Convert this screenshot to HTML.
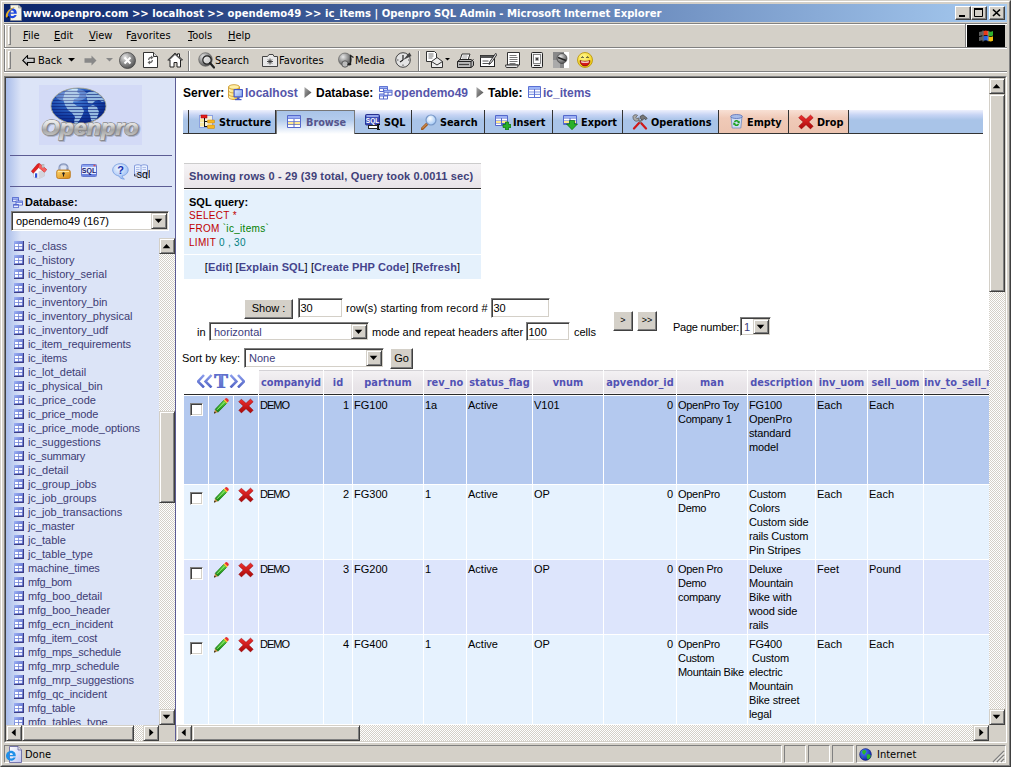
<!DOCTYPE html>
<html><head><meta charset="utf-8"><title>www.openpro.com &gt;&gt; localhost &gt;&gt; opendemo49 &gt;&gt; ic_items | Openpro SQL Admin</title>
<style>
*{box-sizing:border-box;margin:0;padding:0}
html,body{width:1011px;height:767px;overflow:hidden;background:#d4d0c8}
body{position:relative;font-family:"Liberation Sans",Arial,sans-serif;font-size:11px;color:#000}
.abs{position:absolute}
svg{overflow:visible}
.ui{font-family:"DejaVu Sans Condensed","DejaVu Sans","Liberation Sans",sans-serif;font-size:11px;color:#000;white-space:nowrap}
.tb{font-family:"DejaVu Sans Condensed","DejaVu Sans","Liberation Sans",sans-serif;font-weight:bold;white-space:nowrap}
#winborder{left:0;top:0;width:1011px;height:767px;border:1px solid;border-color:#d4d0c8 #404040 #404040 #d4d0c8}
#winborder2{left:1px;top:1px;width:1009px;height:765px;border:1px solid;border-color:#fff #808080 #808080 #fff}
#title{left:4px;top:4px;width:1003px;height:18px;background:linear-gradient(90deg,#0a246a 0%,#a6caf0 100%)}
#title .t{left:19px;top:3px;color:#fff;font-weight:bold;font-size:11.2px;line-height:14px}
.capbtn{top:2px;width:16px;height:14px;background:#d4d0c8;border:1px solid;border-color:#fff #404040 #404040 #fff;box-shadow:inset -1px -1px 0 #808080}
#menubar{left:4px;top:23px;width:1003px;height:24px}
#toolbar{left:4px;top:48px;width:1003px;height:25px}
.grip{width:3px;border:1px solid;border-color:#fff #808080 #808080 #fff}
.hsep{height:2px;border-top:1px solid #808080;border-bottom:1px solid #fff}
.vsep{width:2px;border-left:1px solid #808080;border-right:1px solid #fff}
.menu{top:6px;line-height:13px}
.tbt{top:6px;line-height:13px}
#frames{left:4px;top:76px;width:1003px;height:667px;border:1px solid;border-color:#808080 #fff #fff #808080}
#frames2{left:5px;top:77px;width:1001px;height:665px;border:1px solid;border-color:#404040 #d4d0c8 #d4d0c8 #404040;background:#fff}
#left{left:6px;top:78px;width:169px;height:663px;background:linear-gradient(90deg,#a9bdea 0,#dce4f7 15px,#dce4f7 100%);overflow:hidden}
#lsplit{left:175px;top:78px;width:2px;height:663px;background:linear-gradient(180deg,#fff 0,#fff 647px,#d4d0c8 647px);border-left:1px solid #5c5c94}
#right{left:177px;top:78px;width:828px;height:663px;background:#fff;overflow:hidden}
.track{background-color:#fff;background-image:conic-gradient(#d4d0c8 25%,#fff 0 50%,#d4d0c8 0 75%,#fff 0);background-size:2px 2px}
.sbtn{width:16px;height:16px;background:#d4d0c8;border:1px solid;border-color:#d4d0c8 #404040 #404040 #d4d0c8;box-shadow:inset 1px 1px 0 #fff,inset -1px -1px 0 #808080}
.sbtn svg{position:absolute;left:-1px;top:-1px}
.spanel{top:745px;height:18px;border:1px solid;border-color:#808080 #fff #fff #808080}
/* left frame */
.lhr{left:4px;width:162px;height:1px;background:#5c5c94}
.ti{left:0;width:153px;height:14px}
.tn{left:22px;top:0;line-height:14px;font-size:11px;color:#3c3c74;white-space:nowrap}
.sel{background:#fff;border:1px solid;border-color:#808080 #fff #fff #808080;box-shadow:inset 1px 1px 0 #404040,inset -1px -1px 0 #d4d0c8}
.sel .v{left:4px;top:3px;line-height:13px;font-size:11px;white-space:nowrap}
.sel .dd{right:1px;top:1px;bottom:1px;width:16px;height:auto}
.inp{background:#fff;border:1px solid;border-color:#808080 #fff #fff #808080;box-shadow:inset 1px 1px 0 #404040,inset -1px -1px 0 #d4d0c8}
.inp span{position:absolute;left:1.5px;top:3px;line-height:13px;font-size:11px}
.btn{background:#d4d0c8;border:1px solid;border-color:#fff #404040 #404040 #fff;box-shadow:inset -1px -1px 0 #808080,inset 1px 1px 0 #d4d0c8;text-align:center;font-size:11px}
/* right frame */
.bc{top:8px;font-size:12px;font-weight:bold;line-height:15px;white-space:nowrap}
.bc.l{color:#5555aa}
#tabs{left:6px;top:32px;width:800px;height:24px;background:linear-gradient(180deg,#eef0fc 0,#c6d4f4 5px,#a9c4e8 10px,#a9c4e8 100%);border-bottom:1px solid #333}
.tab{top:0;height:23px;border-right:1px solid #333}
.tab.warn{background:linear-gradient(180deg,#f8e0d4 0,#f0cab8 8px,#ecc4b0 100%)}
.tab .tb{position:absolute;top:6px;font-size:10.8px;line-height:13px;color:#000}
.th{top:292px;height:25px;background:linear-gradient(180deg,#f3f1f3 0,#e9e5e9 60%,#e6e2e6 100%);border-top:1px solid #d4d2d6;border-bottom:1px solid #2a2a2a;text-align:center;box-shadow:inset 0 -1px 0 #f4f0f4}
.th .tb{font-size:10.9px;color:#5252b4;line-height:24px;display:block}
.c{font-size:11px;line-height:14px;padding:2px 1px 0 1px;overflow:hidden}
.r1{background:#b4c9ef}.r2{background:#e6f2fe}.r3{background:#dde5fc}
.cb{width:13px;height:13px;background:#fff;border:1px solid;border-color:#808080 #fff #fff #808080;box-shadow:inset 1px 1px 0 #404040,inset -1px -1px 0 #d4d0c8}
.t11{font-size:11px;line-height:13px;white-space:nowrap}
.sq{font-size:10px;line-height:13px;white-space:nowrap;letter-spacing:.3px}
.lk{font-size:11px;letter-spacing:.1px;line-height:14px;text-align:center;white-space:nowrap}
.lk b{color:#44448c}

</style></head><body>
<svg width="0" height="0" style="position:absolute">
<defs>
<linearGradient id="g-bl" x1="0" y1="0" x2="0" y2="1"><stop offset="0" stop-color="#93a5f2"/><stop offset="1" stop-color="#4a5bc6"/></linearGradient>
<linearGradient id="g-gray" x1="0" y1="0" x2="1" y2="1"><stop offset="0" stop-color="#aaa"/><stop offset="1" stop-color="#444"/></linearGradient>
<linearGradient id="g-yel" x1="0" y1="0" x2="1" y2="0"><stop offset="0" stop-color="#fff4c0"/><stop offset=".5" stop-color="#ffe070"/><stop offset="1" stop-color="#e0a820"/></linearGradient>
<linearGradient id="g-red" x1="0" y1="0" x2="0" y2="1"><stop offset="0" stop-color="#f03030"/><stop offset="1" stop-color="#a80808"/></linearGradient>
<linearGradient id="g-grn" x1="0" y1="0" x2="0" y2="1"><stop offset="0" stop-color="#60d840"/><stop offset="1" stop-color="#108010"/></linearGradient>
<linearGradient id="g-mon" x1="0" y1="0" x2="1" y2="1"><stop offset="0" stop-color="#d8e8ff"/><stop offset="1" stop-color="#88a8f0"/></linearGradient>
<linearGradient id="g-T" x1="0" y1="0" x2="0" y2="1"><stop offset="0" stop-color="#8a9cec"/><stop offset="1" stop-color="#5264c4"/></linearGradient>
<radialGradient id="g-globe" cx=".4" cy=".3" r=".8"><stop offset="0" stop-color="#5a9cf0"/><stop offset=".6" stop-color="#1848b0"/><stop offset="1" stop-color="#081c78"/></radialGradient>
<linearGradient id="g-metal" x1="0" y1="0" x2="0" y2="1"><stop offset="0" stop-color="#ffffff"/><stop offset=".4" stop-color="#dcdcdc"/><stop offset=".6" stop-color="#a4a4a4"/><stop offset="1" stop-color="#d8d8d8"/></linearGradient>
<radialGradient id="g-lens" cx=".4" cy=".35" r=".7"><stop offset="0" stop-color="#fff"/><stop offset="1" stop-color="#9cc4f4"/></radialGradient>
<radialGradient id="g-help" cx=".4" cy=".3" r=".8"><stop offset="0" stop-color="#f0f6ff"/><stop offset="1" stop-color="#8cb4f4"/></radialGradient>
<linearGradient id="g-lock" x1="0" y1="0" x2="1" y2="1"><stop offset="0" stop-color="#ffd870"/><stop offset="1" stop-color="#d88810"/></linearGradient>

<!-- tiny table icon (left list) 10x10 -->
<linearGradient id="g-tbl" x1="0" y1="0" x2="1" y2="1"><stop offset="0" stop-color="#a0b4f6"/><stop offset="1" stop-color="#4858bc"/></linearGradient><symbol id="i-tbl" viewBox="0 0 10 10"><rect x="0" y="0" width="10" height="10" fill="#3c3c84"/><rect x="0" y="0" width="9" height="9" fill="url(#g-tbl)"/><rect x="1" y="3" width="3.200" height="2.200" fill="#fff"/><rect x="5" y="3" width="3.200" height="2.200" fill="#f4f6ff"/><rect x="1" y="6" width="3.200" height="2.200" fill="#fff"/><rect x="5" y="6" width="3.200" height="2.200" fill="#e8ecff"/></symbol>
<!-- arrows -->
<symbol id="a-up" viewBox="0 0 16 16"><path d="M3.700 10.200h7.600L7.500 6z" fill="#000"/></symbol>
<symbol id="a-dn" viewBox="0 0 16 16"><path d="M3.700 5.800h7.600L7.500 10z" fill="#000"/></symbol>
<symbol id="a-lt" viewBox="0 0 16 16"><path d="M9.700 3.700v7.600L5.500 7.500z" fill="#000"/></symbol>
<symbol id="a-rt" viewBox="0 0 16 16"><path d="M6.300 3.700v7.600l4.200-3.800z" fill="#000"/></symbol>
<!-- pencil 16x16 -->
<symbol id="i-edit" viewBox="0 0 16 16"><path d="M1 15.500l1.200-4.200 2.800 2.900z" fill="#c89040"/><path d="M1 15.500l.6-1.900 1.300 1.300z" fill="#111"/><path d="M2.200 11.300L10.600 2.400l3 3L5 14.200z" fill="url(#g-grn)" stroke="#0a6a0a" stroke-width=".6"/><path d="M4 11.800l7.600-7.800" stroke="#a0f080" stroke-width="1"/><path d="M10.600 2.400l1-1.100 3 3-1 1.100z" fill="#f8c820"/><path d="M11.600 1.300l.9-.9c.6-.5 1.300-.4 1.900.2l1 1c.5.600.5 1.300 0 1.800l-.8.900z" fill="#e83030"/></symbol>
<!-- red X 16x16 -->
<symbol id="i-drop" viewBox="0 0 16 16"><path d="M3.300 1.200L8 5.300l4.500-4.200 2.700 2.600-4.400 4.200 4.400 4.300-2.700 2.700L8 10.700l-4.600 4.200L.8 12.300l4.400-4.400L.7 3.800z" fill="url(#g-red)" stroke="#900808" stroke-width=".5" stroke-linejoin="round"/></symbol>
<!-- structure -->
<symbol id="i-struct" viewBox="0 0 16 16"><rect x=".5" y="1.500" width="13" height="12" fill="#f4f0dc" stroke="#8aa0e0" stroke-width="1"/><rect x="1" y="5" width="4" height="3" fill="#f8e8a0"/><rect x="1" y="9" width="4" height="3" fill="#f8e8a0"/><rect x="2" y="1" width="6" height="3" fill="#e02020" stroke="#a00" stroke-width=".5"/><path d="M5.500 4v9M5.500 7.500h3M5.500 12.500h3" stroke="#111" stroke-width="1" fill="none"/><rect x="8.500" y="6" width="7" height="3" rx=".5" fill="#f8b820" stroke="#c08010" stroke-width=".5"/><rect x="8.500" y="11" width="7" height="3.500" rx=".5" fill="#f8b820" stroke="#c08010" stroke-width=".5"/></symbol>
<!-- browse 14x13 -->
<symbol id="i-browse" viewBox="0 0 14 13"><rect x="0" y="0" width="14" height="13" rx="1" fill="#5468cc"/><rect x="1" y="1" width="12" height="2.500" fill="#9cb0f4"/><rect x="1" y="4" width="5.500" height="2.300" fill="#fff"/><rect x="7.500" y="4" width="5.500" height="2.300" fill="#fff"/><rect x="1" y="7" width="5.500" height="2.300" fill="#ffe890"/><rect x="7.500" y="7" width="5.500" height="2.300" fill="#ffe890"/><rect x="1" y="10" width="5.500" height="2" fill="#fff"/><rect x="7.500" y="10" width="5.500" height="2" fill="#fff"/></symbol>
<symbol id="i-tbl13" viewBox="0 0 13 12"><rect x="0" y="0" width="13" height="12" rx="1" fill="#5a70d4"/><rect x="1" y="1" width="11" height="2" fill="#9cb4f8"/><rect x="1" y="3.600" width="5" height="2" fill="#fff"/><rect x="7" y="3.600" width="5" height="2" fill="#fff"/><rect x="1" y="6.300" width="5" height="2" fill="#e8f0ff"/><rect x="7" y="6.300" width="5" height="2" fill="#e8f0ff"/><rect x="1" y="9" width="5" height="2" fill="#fff"/><rect x="7" y="9" width="5" height="2" fill="#fff"/></symbol>
<!-- sql window -->
<symbol id="i-sql" viewBox="0 0 16 16"><rect x=".5" y=".5" width="14" height="10.500" rx="1" fill="#3c4cb8" stroke="#283090" stroke-width="1"/><rect x="1.500" y="1.200" width="12" height="1.600" fill="#a8b8f8"/><text x="7.500" y="8.800" font-family="Liberation Sans,sans-serif" font-weight="bold" font-size="6.500" fill="#fff" text-anchor="middle">SQL</text><rect x="3.500" y="11.500" width="9" height="3" fill="#fff" stroke="#222" stroke-width="1"/><path d="M12 10.500h3M13.500 10.500v5M12 15.500h3" stroke="#111" stroke-width="1" fill="none"/></symbol>
<!-- search -->
<symbol id="i-search" viewBox="0 0 16 16"><path d="M1.200 14.800l5-5" stroke="#a05a20" stroke-width="3" stroke-linecap="round"/><path d="M1.400 14.200l4.300-4.300" stroke="#e0a060" stroke-width="1" stroke-linecap="round"/><circle cx="10" cy="6" r="5" fill="url(#g-lens)" stroke="#7898c8" stroke-width="1.200"/></symbol>
<!-- insert -->
<symbol id="i-insert" viewBox="0 0 16 16"><rect x="0" y="1" width="13" height="11" rx="1" fill="#5468cc"/><rect x="1" y="2" width="11" height="2" fill="#9cb0f4"/><rect x="1" y="4.500" width="5" height="2" fill="#fff"/><rect x="7" y="4.500" width="5" height="2" fill="#fff"/><rect x="1" y="7" width="5" height="2" fill="#ffe890"/><rect x="7" y="7" width="5" height="2" fill="#ffe890"/><rect x="1" y="9.500" width="5" height="1.500" fill="#fff"/><path d="M10.500 8h3v2.500H16v3h-2.500V16h-3v-2.500H8v-3h2.500z" fill="#28b028" stroke="#0a700a" stroke-width=".7"/></symbol>
<!-- export -->
<symbol id="i-export" viewBox="0 0 16 16"><rect x="0" y="1" width="14" height="10" rx="1" fill="#5468cc"/><rect x="1" y="2" width="12" height="2" fill="#9cb0f4"/><rect x="1" y="4.500" width="5.500" height="2" fill="#fff"/><rect x="7.500" y="4.500" width="5.500" height="2" fill="#fff"/><rect x="1" y="7" width="5.500" height="2" fill="#ffe890"/><rect x="7.500" y="7" width="5.500" height="2" fill="#ffe890"/><path d="M6.500 6.500h5v3.500h3L9 15.700 3.500 10h3z" fill="#28b028" stroke="#0a700a" stroke-width=".7"/></symbol>
<!-- operations -->
<symbol id="i-ops" viewBox="0 0 16 16"><path d="M10.500 5L6.500 9.500" stroke="#777" stroke-width="1.800" stroke-linecap="round"/><path d="M6.500 6l3.500 4" stroke="#777" stroke-width="1.800" stroke-linecap="round"/><path d="M2 14.500L6.800 9.200" stroke="#d01818" stroke-width="2.200" stroke-linecap="round"/><path d="M14 14.500L9.500 9.500" stroke="#d01818" stroke-width="2.200" stroke-linecap="round"/><path d="M8 2.500l3-1.700 4.200 3.400-1.400 1.600-1.700-1.400-1.600 1.800-2-1.700z" fill="#777" stroke="#333" stroke-width=".6"/><path d="M1 2.200c1-1.700 3.200-1.900 4.600-.8L3.800 3.200l1 1.400 2.300-.7c.3 1.600-.6 3-2.400 3.300C2.500 7.400.500 5 1 2.200z" fill="#aaa" stroke="#444" stroke-width=".6"/></symbol>
<!-- empty -->
<symbol id="i-empty" viewBox="0 0 13 15"><path d="M1 2.500L2.200 14h8.600L12 2.500z" fill="#d0dcf4" stroke="#7088c0" stroke-width=".8"/><ellipse cx="6.500" cy="2.500" rx="5.800" ry="2" fill="#a8bce8" stroke="#5870b8" stroke-width=".8"/><path d="M4 7.500c1-2 4-2 5 0l1-.5-.5 2.500L7 8.700l1-.5c-.7-1-2.300-1-3 .3z" fill="#18a018"/><path d="M9 10.500c-1 2-4 2-5 0l-1 .5.500-2.500L6 9.300l-1 .5c.7 1 2.300 1 3-.3z" fill="#18a018"/></symbol>
<!-- server -->
<symbol id="i-server" viewBox="0 0 16 17"><path d="M.500 3v10c0 1.500 2.500 2.500 5.500 2.500s5.500-1 5.500-2.500V3z" fill="url(#g-yel)" stroke="#c89020" stroke-width=".8"/><ellipse cx="6" cy="3" rx="5.500" ry="2.300" fill="#fff0a8" stroke="#c89020" stroke-width=".8"/><path d="M.500 6.500c0 1.500 2.500 2.500 5.500 2.500M.500 10c0 1.500 2.500 2.500 5.500 2.500" stroke="#c89020" stroke-width=".7" fill="none"/><rect x="5.500" y="5" width="9.500" height="8.500" rx="1" fill="#4458c8"/><rect x="6.700" y="6.200" width="7.100" height="6.100" fill="url(#g-mon)"/><rect x="9" y="13.500" width="2.500" height="1.500" fill="#4458c8"/><rect x="7" y="15" width="6.500" height="1.200" fill="#4458c8"/></symbol>
<!-- database (3 tables) -->
<symbol id="i-db" viewBox="0 0 14 14"><g id="minitbl"><rect x="0" y="0" width="9" height="6" rx=".8" fill="#5468cc"/><rect x=".8" y=".8" width="7.400" height="1.500" fill="#9cb0f4"/><rect x="1" y="3" width="3" height="2" fill="#fff"/><rect x="5" y="3" width="3" height="2" fill="#fff"/></g><use href="#minitbl" x="0" y="7.500"/><use href="#minitbl" x="4.500" y="3.700"/></symbol>
<!-- «T» -->
<symbol id="i-ft" viewBox="0 0 48 14"><g fill="none" stroke="url(#g-T)" stroke-width="2.500"><path d="M7 1L1 7.500 7 13.500M14.500 1L8.500 7.500l6 6M33.500 1l6 6.500-6 6M41 1l6 6.500-6 6"/></g><text x="24" y="13.600" font-family="Liberation Serif,serif" font-weight="bold" font-size="20.500" text-anchor="middle" fill="url(#g-T)" stroke="#5868c8" stroke-width=".9">T</text></symbol>
<!-- bc arrow -->
<symbol id="i-arr" viewBox="0 0 8 11"><path d="M.500 0l7 5.500-7 5.500z" fill="url(#g-gray)"/></symbol>

<!-- chrome icons -->
<radialGradient id="g-ball" cx=".35" cy=".3" r=".8"><stop offset="0" stop-color="#e8e8e8"/><stop offset=".5" stop-color="#909090"/><stop offset="1" stop-color="#484848"/></radialGradient>
<radialGradient id="g-earth" cx=".35" cy=".3" r=".8"><stop offset="0" stop-color="#5080ff"/><stop offset="1" stop-color="#0818a0"/></radialGradient>
<radialGradient id="g-smile" cx=".4" cy=".3" r=".8"><stop offset="0" stop-color="#fff890"/><stop offset="1" stop-color="#f0c800"/></radialGradient>
<linearGradient id="g-arrw" x1="0" y1="0" x2="0" y2="1"><stop offset="0" stop-color="#fff"/><stop offset="1" stop-color="#999"/></linearGradient>
<symbol id="c-ie" viewBox="0 0 18 18"><path d="M5.500 1h8l3 3v12.500h-11z" fill="#f4f4e8" stroke="#888" stroke-width=".6"/><path d="M13.500 1v3h3z" fill="#ccc" stroke="#888" stroke-width=".5"/><path d="M2 9.500c0-3 2.300-5.300 5.200-5.300 2.800 0 4.800 2.200 4.600 5.600H5c.2 1.500 1.200 2.300 2.400 2.300 1 0 1.700-.4 2.100-1.100h2.200c-.7 2-2.300 3.200-4.400 3.200C4.300 14.200 2 12.200 2 9.500zm3-.9h3.900c-.1-1.300-.9-2.100-1.900-2.100s-1.800.8-2 2.100z" fill="#1c48e0"/><path d="M1 13.500C-.5 9 5 3.500 10.500 3c-4 1.500-8.500 6-7.500 9.500-.5.800-1.300 1.200-2 1z" fill="#e8b020"/><path d="M2.500 13.500c.8.500 2 .2 2.500-.5l-2-1z" fill="#111"/></symbol>
<symbol id="c-back" viewBox="0 0 13 11"><path d="M5.500.700L.800 5.400l4.700 4.700V7.500h6.700V3.300H5.500z" fill="url(#g-arrw)" stroke="#000" stroke-width="1.100" stroke-linejoin="miter"/></symbol>
<symbol id="c-fwd" viewBox="0 0 13 11"><path d="M7.500.500l5 5-5 5V7.700H.500V3.300h7z" fill="#888"/></symbol>
<symbol id="c-stop" viewBox="0 0 17 17"><circle cx="8.500" cy="8.500" r="8" fill="url(#g-ball)" stroke="#444" stroke-width=".8"/><path d="M5.500 5.500l6 6M11.500 5.500l-6 6" stroke="#fff" stroke-width="2"/></symbol>
<symbol id="c-refresh" viewBox="0 0 15 16"><path d="M.500.500h10l4 4v11h-14z" fill="#fff" stroke="#333" stroke-width="1"/><path d="M10.500.500v4h4" fill="#ddd" stroke="#333" stroke-width="1"/><path d="M5 8c0-2 1.200-3 3-3.200V3.500L10.500 5.500 8 7.500V6.200C6.800 6.400 6.300 7 6.300 8z" fill="#666"/><path d="M10 8c0 2-1.200 3-3 3.200v1.300L4.500 10.500 7 8.500v1.300C8.200 9.600 8.700 9 8.700 8z" fill="#666"/></symbol>
<symbol id="c-home" viewBox="0 0 16 16"><path d="M8 1L.800 8h2.200v7h4V10.500h3V15h3.500V8h2L12.500 5V1.800h-2V3.300z" fill="#fff" stroke="#222" stroke-width="1" stroke-linejoin="round"/><path d="M8 1L.800 8h2L8 3l5.500 5h2z" fill="#555"/></symbol>
<symbol id="c-search" viewBox="0 0 17 17"><circle cx="7.500" cy="7.500" r="6.800" fill="url(#g-ball)" stroke="#555" stroke-width=".6"/><circle cx="9" cy="8" r="4.200" fill="#eee" fill-opacity=".75" stroke="#222" stroke-width="1.200"/><path d="M12 11l4 4.500" stroke="#222" stroke-width="2.200" stroke-linecap="round"/></symbol>
<symbol id="c-fav" viewBox="0 0 16 13"><path d="M.500 2.500h5l1.500-2h4l1 2h3.500v10h-15z" fill="#e8e8e8" stroke="#444" stroke-width="1"/><path d="M8 4.500v6M5 7.500h6M6 5.500l4 4M10 5.500l-4 4" stroke="#333" stroke-width=".9"/></symbol>
<symbol id="c-media" viewBox="0 0 17 17"><circle cx="7" cy="7.500" r="6.500" fill="url(#g-ball)" stroke="#555" stroke-width=".6"/><circle cx="7" cy="12" r="3.200" fill="#bbb" stroke="#444" stroke-width=".8"/><path d="M12.500 12V3.500l3 2" stroke="#222" stroke-width="1.300" fill="none"/><ellipse cx="11.300" cy="12.300" rx="1.800" ry="1.300" fill="#222"/></symbol>
<symbol id="c-hist" viewBox="0 0 17 17"><circle cx="8" cy="9" r="7.300" fill="#e4e4e4" stroke="#444" stroke-width="1"/><path d="M8 9l6.500-7.500 2 3.500z" fill="#444"/><path d="M8 9V4M8 9l-3 2" stroke="#222" stroke-width="1.200"/><path d="M2 9h1.500M8 15v-1.500M13 9h1.500" stroke="#555" stroke-width="1"/></symbol>
<symbol id="c-mail" viewBox="0 0 17 17"><path d="M.500.500h8l2 2v8h-10z" fill="#fff" stroke="#333" stroke-width="1"/><path d="M2.500 3h5M2.500 5h5M2.500 7h4" stroke="#777" stroke-width="1"/><path d="M5.500 10.500l5.500-4 5.500 4v6h-11z" fill="#eee" stroke="#333" stroke-width="1"/><path d="M5.500 10.500l5.500 3.500 5.500-3.500" fill="none" stroke="#333" stroke-width="1"/></symbol>
<symbol id="c-print" viewBox="0 0 17 15"><path d="M5 1h8l-2 6H3z" fill="#fff" stroke="#333" stroke-width="1"/><path d="M5.500 3h5M5 5h5" stroke="#888" stroke-width=".8"/><path d="M.500 8.500L3 6.500h11l2.500 2v4l-2.500 2H.500z" fill="#bbb" stroke="#222" stroke-width="1"/><path d="M.500 8.500h13.500l2.500-2M14 8.500v6" stroke="#222" stroke-width="1" fill="none"/><path d="M2 11.500h10" stroke="#444" stroke-width="1.200"/></symbol>
<symbol id="c-edit" viewBox="0 0 17 14"><rect x=".500" y="2.500" width="14" height="11" fill="#fff" stroke="#222" stroke-width="1"/><rect x=".500" y="2.500" width="14" height="2.500" fill="#555"/><path d="M2.500 8h6M2.500 10.500h8" stroke="#555" stroke-width="1"/><path d="M9 11.500l1-3 5.500-8 1.500 1-5.500 8z" fill="#ddd" stroke="#222" stroke-width=".9"/></symbol>
<symbol id="c-disc" viewBox="0 0 16 16"><path d="M2.500.500h12v12.500h-12z" fill="#fff" stroke="#333" stroke-width="1"/><path d="M.500 13h12.500v1c0 1.500-1.500 1.500-1.500 1.500H2c-1.500 0-1.500-1.500-1.500-2.500z" fill="#e8e8e8" stroke="#333" stroke-width="1"/><path d="M4.500 3.500h7M4.500 5.500h8M4.500 7.500h8M4.500 9.500h8M4.500 11.500h6" stroke="#777" stroke-width="1"/></symbol>
<symbol id="c-pda" viewBox="0 0 12 16"><rect x=".500" y=".500" width="11" height="15" rx="1" fill="#eee" stroke="#222" stroke-width="1"/><rect x="2.500" y="2.500" width="7" height="9" fill="#fff" stroke="#666" stroke-width=".8"/><path d="M6 5v4M4 7h4M4.600 5.600l2.800 2.800M7.400 5.600L4.600 8.400" stroke="#333" stroke-width=".8"/><path d="M3 13.500h6" stroke="#333" stroke-width="1"/></symbol>
<symbol id="c-dark" viewBox="0 0 16 16"><rect x="0" y="0" width="16" height="16" fill="#fff"/><rect x="0" y="0" width="11" height="16" fill="#888"/><rect x="0" y="8" width="7" height="8" fill="#aaa"/><circle cx="9" cy="6.500" r="5" fill="url(#g-ball)" stroke="#333" stroke-width=".6"/><path d="M5 5.500l8 3" stroke="#222" stroke-width="1.500"/></symbol>
<symbol id="c-smile" viewBox="0 0 16 16"><circle cx="8" cy="8" r="7.500" fill="url(#g-smile)" stroke="#b89000" stroke-width=".8"/><path d="M3 8.500c1.500 1 8.500 1 10 0 0 3.500-2.200 5.500-5 5.500s-5-2-5-5.500z" fill="#d81818" stroke="#600" stroke-width=".6"/><path d="M4 9.200c2 .6 6 .6 8 0l-.3 1.200c-2 .5-5.400.5-7.400 0z" fill="#fff"/><path d="M4.500 6c.5-1.500 1.500-1.500 2 0M9.500 6c.5-1.500 1.500-1.500 2 0" stroke="#222" stroke-width="1" fill="none"/></symbol>
<symbol id="c-flag" viewBox="0 0 16 14"><path d="M5.500 2c1.500-.8 3-.8 4.500 0v4.500c-1.500-.8-3-.8-4.500 0z" fill="#e83818"/><path d="M10.500 2.200c1.500.7 3 .7 4.500-.2v4.500c-1.500.8-3 .8-4.500.2z" fill="#30b030"/><path d="M5.500 7.300c1.500-.8 3-.8 4.500 0v4.500c-1.500-.8-3-.8-4.500 0z" fill="#2860e0"/><path d="M10.500 7.500c1.500.7 3 .7 4.500-.2v4.500c-1.500.8-3 .8-4.500.2z" fill="#f0c010"/><path d="M1 3l3.500-.8v4L1 7zM1 8l3.500-.7v4L1 12z" fill="#888" fill-opacity=".7"/><path d="M5 1.500v11M10.200 1.800v10.500" stroke="#ddd" stroke-width=".6"/></symbol>
<symbol id="c-earth" viewBox="0 0 16 16"><circle cx="8" cy="8" r="7.300" fill="url(#g-earth)" stroke="#06105a" stroke-width=".6"/><path d="M4 3.500c2-1.500 4-1 5 .5 0 2-2 2.500-2.500 4.500-1.500-.5-3-2.500-2.500-5zM10 8c2-1 4 0 4.500 1.500-.5 2.500-2 4-4 4.500-1-2-1.500-4-.5-6zM3 10c1 0 2 1 2.500 2.500C4.500 12 3.500 11 3 10z" fill="#28b828"/></symbol>
<linearGradient id="g-pg" x1="0" y1="0" x2="1" y2="1"><stop offset="0" stop-color="#fff"/><stop offset="1" stop-color="#c0c4f0"/></linearGradient><symbol id="c-page" viewBox="0 0 17 17"><path d="M4.500.500h8.500l3.500 3.500v12.500h-12z" fill="url(#g-pg)" stroke="#5a5a9a" stroke-width=".8"/><path d="M13 .500V4h3.500" fill="#ddd" stroke="#5a5a9a" stroke-width=".7"/><path d="M1 10c0-3 2.300-5.300 5.200-5.300 2.800 0 4.800 2.200 4.600 5.600H4c.2 1.500 1.200 2.300 2.400 2.300 1 0 1.700-.4 2.100-1.100h2.200c-.7 2-2.300 3.200-4.400 3.200C3.300 14.700 1 12.700 1 10zm3-.9h3.900C7.800 7.800 7 7 6 7s-1.800.8-2 2.100z" fill="#2090e8"/></symbol>

<!-- left frame icons -->
<symbol id="l-home" viewBox="0 0 16 16"><path d="M2.500 8v6l5 1.700 6-2.700V7L8 3z" fill="#fafafa" stroke="#b8b8c0" stroke-width=".6"/><path d="M7.500 15.700V8.500l6-2v6.500z" fill="#d4d4dc"/><path d="M.300 8.300L6.500 1c.6-.7 1.600-.8 2.300-.2l6.900 5.700-2.200 2.700L7.700 4.400 2.300 10.300z" fill="#e42020" stroke="#a01010" stroke-width=".5"/><path d="M7.700 4.400l5.800 4.800 2.200-2.700L8.800.800z" fill="#f46060"/><rect x="4" y="10.300" width="2.200" height="4.400" fill="#3050d8"/><rect x="11" y="1.500" width="2" height="3" fill="#ccc" stroke="#999" stroke-width=".4"/></symbol>
<symbol id="l-lock" viewBox="0 0 15 16"><path d="M3.500 8V5c0-5 8-5 8 0v3" fill="none" stroke="#8c9cc0" stroke-width="2.200"/><path d="M4 7V5c0-3.800 7-3.800 7 0" fill="none" stroke="#d0d8ec" stroke-width=".8"/><rect x=".700" y="7" width="13.600" height="8.500" rx="1.800" fill="url(#g-lock)" stroke="#b87010" stroke-width=".8"/><path d="M2 8.500h11" stroke="#ffe8a0" stroke-width="1"/><circle cx="7.500" cy="10.500" r="1.200" fill="#222"/><rect x="7" y="10.500" width="1" height="3" fill="#222"/></symbol>
<symbol id="l-sql" viewBox="0 0 16 13"><rect x=".500" y=".500" width="15" height="12" rx=".8" fill="#e4ecff" stroke="#6478d0" stroke-width="1"/><rect x="1" y="1" width="14" height="1.800" fill="#88a0f0"/><rect x="1" y="10" width="14" height="2" fill="#6c84e0"/><rect x="12.500" y=".800" width="2" height="1.500" fill="#e05050"/><text x="8" y="9.300" font-family="Liberation Sans,sans-serif" font-weight="bold" font-size="7" fill="#182070" text-anchor="middle">SQL</text></symbol>
<symbol id="l-help" viewBox="0 0 17 17"><path d="M8.500.700c4.300 0 7.700 2.700 7.700 6.200 0 3-2.600 5.400-6 6 .2 1.400.9 2.500 2.200 3.200-2.800 0-4.800-1.200-5.600-3.200C3.300 12.300.700 9.900.700 6.900.700 3.400 4.200.700 8.500.700z" fill="url(#g-help)" stroke="#7ca0e0" stroke-width=".9"/><text x="8.500" y="10.800" font-family="Liberation Sans,sans-serif" font-weight="bold" font-size="11" fill="#1830b0" text-anchor="middle">?</text></symbol>
<symbol id="l-doc" viewBox="0 0 16 15"><path d="M.500 1.500c2.500-1 4.500-1 6.500 0 2-1 4-1 6.500 0v9c-2.500-1-4.500-1-6.500 0-2-1-4-1-6.500 0z" fill="#e8f0ff" stroke="#7c94d8" stroke-width=".9"/><path d="M7 1.500v9" stroke="#7c94d8" stroke-width=".8"/><path d="M2 3.500h3.500M2 5.500h3.500M2 7.500h3.500M8.500 3.500H12M8.500 5.500H12" stroke="#a8b8e8" stroke-width=".9"/><path d="M.500 10v2h3" stroke="#445" stroke-width="1" fill="none"/><text x="16.300" y="14" font-family="Liberation Sans,sans-serif" font-size="10.500" fill="#000" text-anchor="end">sql</text></symbol>
<symbol id="l-db" viewBox="0 0 11 11"><rect x="0" y="0" width="7" height="5" rx=".8" fill="#5468cc"/><rect x=".8" y=".8" width="5.400" height="1.200" fill="#9cb0f4"/><rect x="1" y="2.600" width="5" height="1.600" fill="#e8eeff"/><rect x="3.500" y="3.500" width="7.500" height="5" rx=".8" fill="#5468cc"/><rect x="4.300" y="4.300" width="5.900" height="1.200" fill="#9cb0f4"/><rect x="4.500" y="6" width="5.500" height="1.700" fill="#e8eeff"/><rect x="1" y="7" width="6" height="4" rx=".8" fill="#5468cc"/><rect x="1.800" y="8.600" width="4.400" height="1.600" fill="#e8eeff"/></symbol>
<clipPath id="cp-globe"><ellipse cx="39.500" cy="21" rx="27" ry="17.500"/></clipPath>
<symbol id="l-logo" viewBox="0 0 103 60"><ellipse cx="39.500" cy="21" rx="27.500" ry="18" fill="url(#g-globe)" stroke="#a8a890" stroke-width=".9"/><g clip-path="url(#cp-globe)"><g fill="#b4dcf8" transform="translate(0 1)"><path d="M26 6c4-3 9-4 13-3l-1 3 3 2-2 4-4 1-1 4 4 3 5 1 2 4-2 5-3 5-3 4-2-3 1-5-3-4-4-3-3-5-2-6z"/><path d="M47 8c3-3 8-4 12-2l5 4 2 5-3 1-3-2-4 1-3 3-4-1-1-4z"/><path d="M49 21l5-2 4 2 2 5-2 6-3 5-3-3-1-5-2-4z"/></g><g stroke="#0a2078" stroke-width="1.300" stroke-opacity=".7"><path d="M10 6.500h60M10 9.500h60M10 12.500h60M10 15.500h60M10 18.500h60M10 21.500h60M10 24.500h60M10 27.500h60M10 30.500h60M10 33.500h60M10 36.500h60"/></g><ellipse cx="32" cy="10" rx="16" ry="7" fill="#fff" fill-opacity=".25"/></g>
<text x="51" y="49.500" font-family="Liberation Sans,sans-serif" font-weight="bold" font-style="italic" font-size="21.500" text-anchor="middle" textLength="97" lengthAdjust="spacingAndGlyphs" fill="#555" fill-opacity=".5" stroke="#555" stroke-opacity=".3" stroke-width="2.200" transform="translate(1.500 1.800)">Openpro</text>
<text x="51" y="49.500" font-family="Liberation Sans,sans-serif" font-weight="bold" font-style="italic" font-size="21.500" text-anchor="middle" textLength="97" lengthAdjust="spacingAndGlyphs" fill="url(#g-metal)" stroke="#8c8c8c" stroke-width="1.400" paint-order="stroke">Openpro</text>
<text x="51" y="49.500" font-family="Liberation Sans,sans-serif" font-weight="bold" font-style="italic" font-size="21.500" text-anchor="middle" textLength="97" lengthAdjust="spacingAndGlyphs" fill="url(#g-metal)">Openpro</text></symbol>
</defs></svg>

<div class="abs" id="winborder"></div><div class="abs" id="winborder2"></div>
<div class="abs" id="title">
 <svg class="abs" style="left:1px;top:0" width="18" height="18"><use href="#c-ie"/></svg>
 <div class="abs ui t">www.openpro.com &gt;&gt; localhost &gt;&gt; opendemo49 &gt;&gt; ic_items | Openpro SQL Admin - Microsoft Internet Explorer</div>
 <div class="abs capbtn" style="left:951px"><svg class="abs" style="left:0;top:0" width="14" height="12"><rect x="3" y="8" width="6" height="2" fill="#000"/></svg></div>
 <div class="abs capbtn" style="left:967px"><svg class="abs" style="left:0;top:0" width="14" height="12"><path d="M2.500 2v7.500h8V2z" fill="none" stroke="#000" stroke-width="1"/><rect x="2" y="1" width="9" height="2" fill="#000"/></svg></div>
 <div class="abs capbtn" style="left:985px"><svg class="abs" style="left:0;top:0" width="14" height="12"><path d="M3 2.500l7 6.500M10 2.500L3 9" stroke="#000" stroke-width="1.700"/></svg></div>
</div>
<div class="abs vsep" style="left:4px;top:23px;height:49px"></div>
<div class="abs hsep" style="left:4px;top:23px;width:1003px"></div>
<div class="abs" id="menubar">
 <div class="abs grip" style="left:4px;top:3px;height:19px"></div>
 <div class="abs ui menu" style="left:19px"><u>F</u>ile</div>
 <div class="abs ui menu" style="left:50px"><u>E</u>dit</div>
 <div class="abs ui menu" style="left:85px"><u>V</u>iew</div>
 <div class="abs ui menu" style="left:122px">F<u>a</u>vorites</div>
 <div class="abs ui menu" style="left:184px"><u>T</u>ools</div>
 <div class="abs ui menu" style="left:224px"><u>H</u>elp</div>
 <div class="abs vsep" style="left:961px;top:1px;height:23px"></div>
 <div class="abs" style="left:963px;top:2px;width:38px;height:22px;background:#000"><svg class="abs" style="left:11px;top:4px" width="16" height="14"><use href="#c-flag"/></svg></div>
</div>
<div class="abs hsep" style="left:4px;top:47px;width:1003px"></div>
<div class="abs" id="toolbar">
 <div class="abs grip" style="left:4px;top:3px;height:18px"></div>
 <svg class="abs" style="left:18px;top:7px" width="13" height="11"><use href="#c-back"/></svg>
 <div class="abs ui tbt" style="left:34px">Back</div>
 <svg class="abs" style="left:64px;top:10px" width="7" height="4"><path d="M0 0h7L3.500 3.500z" fill="#000"/></svg>
 <svg class="abs" style="left:80px;top:7px" width="13" height="11"><use href="#c-fwd"/></svg>
 <svg class="abs" style="left:102px;top:10px" width="7" height="4"><path d="M0 0h7L3.500 3.500z" fill="#888"/></svg>
 <svg class="abs" style="left:115px;top:4px" width="17" height="17"><use href="#c-stop"/></svg>
 <svg class="abs" style="left:139px;top:4px" width="15" height="16"><use href="#c-refresh"/></svg>
 <svg class="abs" style="left:163px;top:4px" width="16" height="16"><use href="#c-home"/></svg>
 <div class="abs vsep" style="left:184px;top:3px;height:20px"></div>
 <svg class="abs" style="left:194px;top:4px" width="17" height="17"><use href="#c-search"/></svg>
 <div class="abs ui tbt" style="left:211px">Search</div>
 <svg class="abs" style="left:258px;top:6px" width="16" height="13"><use href="#c-fav"/></svg>
 <div class="abs ui tbt" style="left:275px">Favorites</div>
 <svg class="abs" style="left:334px;top:4px" width="17" height="17"><use href="#c-media"/></svg>
 <div class="abs ui tbt" style="left:351px">Media</div>
 <svg class="abs" style="left:391px;top:3px" width="17" height="17"><use href="#c-hist"/></svg>
 <div class="abs vsep" style="left:414px;top:3px;height:20px"></div>
 <svg class="abs" style="left:422px;top:3px" width="17" height="17"><use href="#c-mail"/></svg>
 <svg class="abs" style="left:441px;top:10px" width="5" height="3"><path d="M0 0h5L2.500 2.500z" fill="#000"/></svg>
 <svg class="abs" style="left:453px;top:5px" width="17" height="15"><use href="#c-print"/></svg>
 <svg class="abs" style="left:476px;top:5px" width="17" height="14"><use href="#c-edit"/></svg>
 <svg class="abs" style="left:501px;top:4px" width="16" height="16"><use href="#c-disc"/></svg>
 <svg class="abs" style="left:527px;top:4px" width="12" height="16"><use href="#c-pda"/></svg>
 <svg class="abs" style="left:549px;top:4px" width="16" height="16"><use href="#c-dark"/></svg>
 <svg class="abs" style="left:573px;top:4px" width="16" height="16"><use href="#c-smile"/></svg>
</div>
<div class="abs hsep" style="left:4px;top:71px;width:1003px"></div>
<div class="abs" id="frames"></div><div class="abs" id="frames2"></div>
<!-- status bar -->
<div class="abs spanel" style="left:4px;width:778px"></div>
<div class="abs spanel" style="left:784px;width:22px"></div>
<div class="abs spanel" style="left:808px;width:22px"></div>
<div class="abs spanel" style="left:832px;width:22px"></div>
<div class="abs spanel" style="left:856px;width:150px"></div>
<svg class="abs" style="left:5px;top:746px" width="17" height="17"><use href="#c-page"/></svg>
<div class="abs ui" style="left:25px;top:748px;line-height:13px">Done</div>
<svg class="abs" style="left:859px;top:748px" width="13" height="13"><use href="#c-earth"/></svg>
<div class="abs ui" style="left:877px;top:748px;line-height:13px">Internet</div>
<svg class="abs" style="left:992px;top:750px" width="13" height="13"><path d="M12 1L1 12M12 5L5 12M12 9L9 12" stroke="#808080" stroke-width="1.400"/><path d="M12.500 2L2 12.500M12.500 6L6 12.500M12.500 10L10 12.500" stroke="#fff" stroke-width=".8"/></svg>

<div class="abs" id="left">
 <div class="abs" style="left:33px;top:7px;width:103px;height:60px;background:#d3daf6"><svg class="abs" style="left:0;top:0" width="103" height="60"><use href="#l-logo"/></svg></div>
 <svg class="abs" style="left:25px;top:85px" width="16" height="16"><use href="#l-home"/></svg>
 <svg class="abs" style="left:50px;top:85px" width="15" height="16"><use href="#l-lock"/></svg>
 <svg class="abs" style="left:75px;top:86px" width="16" height="13"><use href="#l-sql"/></svg>
 <svg class="abs" style="left:106px;top:85px" width="17" height="17"><use href="#l-help"/></svg>
 <svg class="abs" style="left:128px;top:86px" width="16" height="15"><use href="#l-doc"/></svg>
 <svg class="abs" style="left:6px;top:119px" width="11" height="11"><use href="#l-db"/></svg>
 <div class="abs lhr" style="top:77px"></div>
 <div class="abs lhr" style="top:108px"></div>
 <div class="abs" style="left:19px;top:118px;font-weight:bold;font-size:11px;line-height:13px">Database:</div>
 <div class="abs sel" style="left:5px;top:133px;width:158px;height:20px"><span class="abs v">opendemo49 (167)</span><div class="abs sbtn dd"><svg width="16" height="16"><use href="#a-dn"/></svg></div></div>
 <div class="abs ti" style="top:161px"><svg class="abs" style="left:8px;top:2px" width="10" height="10"><use href="#i-tbl"/></svg><span class="abs tn" style="letter-spacing:-0.000px">ic_class</span></div>
<div class="abs ti" style="top:175px"><svg class="abs" style="left:8px;top:2px" width="10" height="10"><use href="#i-tbl"/></svg><span class="abs tn" style="letter-spacing:-0.000px">ic_history</span></div>
<div class="abs ti" style="top:189px"><svg class="abs" style="left:8px;top:2px" width="10" height="10"><use href="#i-tbl"/></svg><span class="abs tn" style="letter-spacing:-0.000px">ic_history_serial</span></div>
<div class="abs ti" style="top:203px"><svg class="abs" style="left:8px;top:2px" width="10" height="10"><use href="#i-tbl"/></svg><span class="abs tn" style="letter-spacing:-0.000px">ic_inventory</span></div>
<div class="abs ti" style="top:217px"><svg class="abs" style="left:8px;top:2px" width="10" height="10"><use href="#i-tbl"/></svg><span class="abs tn" style="letter-spacing:-0.000px">ic_inventory_bin</span></div>
<div class="abs ti" style="top:231px"><svg class="abs" style="left:8px;top:2px" width="10" height="10"><use href="#i-tbl"/></svg><span class="abs tn" style="letter-spacing:-0.000px">ic_inventory_physical</span></div>
<div class="abs ti" style="top:245px"><svg class="abs" style="left:8px;top:2px" width="10" height="10"><use href="#i-tbl"/></svg><span class="abs tn" style="letter-spacing:-0.000px">ic_inventory_udf</span></div>
<div class="abs ti" style="top:259px"><svg class="abs" style="left:8px;top:2px" width="10" height="10"><use href="#i-tbl"/></svg><span class="abs tn" style="letter-spacing:-0.115px">ic_item_requirements</span></div>
<div class="abs ti" style="top:273px"><svg class="abs" style="left:8px;top:2px" width="10" height="10"><use href="#i-tbl"/></svg><span class="abs tn" style="letter-spacing:-0.144px">ic_items</span></div>
<div class="abs ti" style="top:287px"><svg class="abs" style="left:8px;top:2px" width="10" height="10"><use href="#i-tbl"/></svg><span class="abs tn" style="letter-spacing:-0.000px">ic_lot_detail</span></div>
<div class="abs ti" style="top:301px"><svg class="abs" style="left:8px;top:2px" width="10" height="10"><use href="#i-tbl"/></svg><span class="abs tn" style="letter-spacing:-0.000px">ic_physical_bin</span></div>
<div class="abs ti" style="top:315px"><svg class="abs" style="left:8px;top:2px" width="10" height="10"><use href="#i-tbl"/></svg><span class="abs tn" style="letter-spacing:-0.000px">ic_price_code</span></div>
<div class="abs ti" style="top:329px"><svg class="abs" style="left:8px;top:2px" width="10" height="10"><use href="#i-tbl"/></svg><span class="abs tn" style="letter-spacing:-0.088px">ic_price_mode</span></div>
<div class="abs ti" style="top:343px"><svg class="abs" style="left:8px;top:2px" width="10" height="10"><use href="#i-tbl"/></svg><span class="abs tn" style="letter-spacing:-0.055px">ic_price_mode_options</span></div>
<div class="abs ti" style="top:357px"><svg class="abs" style="left:8px;top:2px" width="10" height="10"><use href="#i-tbl"/></svg><span class="abs tn" style="letter-spacing:-0.000px">ic_suggestions</span></div>
<div class="abs ti" style="top:371px"><svg class="abs" style="left:8px;top:2px" width="10" height="10"><use href="#i-tbl"/></svg><span class="abs tn" style="letter-spacing:-0.230px">ic_summary</span></div>
<div class="abs ti" style="top:385px"><svg class="abs" style="left:8px;top:2px" width="10" height="10"><use href="#i-tbl"/></svg><span class="abs tn" style="letter-spacing:-0.000px">jc_detail</span></div>
<div class="abs ti" style="top:399px"><svg class="abs" style="left:8px;top:2px" width="10" height="10"><use href="#i-tbl"/></svg><span class="abs tn" style="letter-spacing:-0.000px">jc_group_jobs</span></div>
<div class="abs ti" style="top:413px"><svg class="abs" style="left:8px;top:2px" width="10" height="10"><use href="#i-tbl"/></svg><span class="abs tn" style="letter-spacing:-0.000px">jc_job_groups</span></div>
<div class="abs ti" style="top:427px"><svg class="abs" style="left:8px;top:2px" width="10" height="10"><use href="#i-tbl"/></svg><span class="abs tn" style="letter-spacing:-0.000px">jc_job_transactions</span></div>
<div class="abs ti" style="top:441px"><svg class="abs" style="left:8px;top:2px" width="10" height="10"><use href="#i-tbl"/></svg><span class="abs tn" style="letter-spacing:-0.128px">jc_master</span></div>
<div class="abs ti" style="top:455px"><svg class="abs" style="left:8px;top:2px" width="10" height="10"><use href="#i-tbl"/></svg><span class="abs tn" style="letter-spacing:-0.000px">jc_table</span></div>
<div class="abs ti" style="top:469px"><svg class="abs" style="left:8px;top:2px" width="10" height="10"><use href="#i-tbl"/></svg><span class="abs tn" style="letter-spacing:-0.000px">jc_table_type</span></div>
<div class="abs ti" style="top:483px"><svg class="abs" style="left:8px;top:2px" width="10" height="10"><use href="#i-tbl"/></svg><span class="abs tn" style="letter-spacing:-0.177px">machine_times</span></div>
<div class="abs ti" style="top:497px"><svg class="abs" style="left:8px;top:2px" width="10" height="10"><use href="#i-tbl"/></svg><span class="abs tn" style="letter-spacing:-0.329px">mfg_bom</span></div>
<div class="abs ti" style="top:511px"><svg class="abs" style="left:8px;top:2px" width="10" height="10"><use href="#i-tbl"/></svg><span class="abs tn" style="letter-spacing:-0.082px">mfg_boo_detail</span></div>
<div class="abs ti" style="top:525px"><svg class="abs" style="left:8px;top:2px" width="10" height="10"><use href="#i-tbl"/></svg><span class="abs tn" style="letter-spacing:-0.082px">mfg_boo_header</span></div>
<div class="abs ti" style="top:539px"><svg class="abs" style="left:8px;top:2px" width="10" height="10"><use href="#i-tbl"/></svg><span class="abs tn" style="letter-spacing:-0.072px">mfg_ecn_incident</span></div>
<div class="abs ti" style="top:553px"><svg class="abs" style="left:8px;top:2px" width="10" height="10"><use href="#i-tbl"/></svg><span class="abs tn" style="letter-spacing:-0.177px">mfg_item_cost</span></div>
<div class="abs ti" style="top:567px"><svg class="abs" style="left:8px;top:2px" width="10" height="10"><use href="#i-tbl"/></svg><span class="abs tn" style="letter-spacing:-0.144px">mfg_mps_schedule</span></div>
<div class="abs ti" style="top:581px"><svg class="abs" style="left:8px;top:2px" width="10" height="10"><use href="#i-tbl"/></svg><span class="abs tn" style="letter-spacing:-0.144px">mfg_mrp_schedule</span></div>
<div class="abs ti" style="top:595px"><svg class="abs" style="left:8px;top:2px" width="10" height="10"><use href="#i-tbl"/></svg><span class="abs tn" style="letter-spacing:-0.121px">mfg_mrp_suggestions</span></div>
<div class="abs ti" style="top:609px"><svg class="abs" style="left:8px;top:2px" width="10" height="10"><use href="#i-tbl"/></svg><span class="abs tn" style="letter-spacing:-0.077px">mfg_qc_incident</span></div>
<div class="abs ti" style="top:623px"><svg class="abs" style="left:8px;top:2px" width="10" height="10"><use href="#i-tbl"/></svg><span class="abs tn" style="letter-spacing:-0.128px">mfg_table</span></div>
<div class="abs ti" style="top:637px"><svg class="abs" style="left:8px;top:2px" width="10" height="10"><use href="#i-tbl"/></svg><span class="abs tn" style="letter-spacing:-0.077px">mfg_tables_type</span></div>
 <!-- inner v scrollbar -->
 <div class="abs track" style="left:153px;top:160px;width:16px;height:487px"></div>
 <div class="abs sbtn" style="left:153px;top:160px"><svg width="16" height="16"><use href="#a-up"/></svg></div>
 <div class="abs sbtn" style="left:153px;top:333px;height:92px"></div>
 <div class="abs sbtn" style="left:153px;top:631px"><svg width="16" height="16"><use href="#a-dn"/></svg></div>
 <!-- frame h scrollbar -->
 <div class="abs track" style="left:0;top:647px;width:153px;height:16px"></div>
 <div class="abs sbtn" style="left:0;top:647px"><svg width="16" height="16"><use href="#a-lt"/></svg></div>
 <div class="abs sbtn" style="left:16px;top:647px;width:112px"></div>
 <div class="abs sbtn" style="left:137px;top:647px"><svg width="16" height="16"><use href="#a-rt"/></svg></div>
 <div class="abs" style="left:153px;top:647px;width:16px;height:16px;background:#d4d0c8"></div>
</div>
<div class="abs" id="lsplit"></div>

<div class="abs" id="right">
 <!-- breadcrumb -->
 <div class="abs bc" style="left:6px">Server:</div>
 <div class="abs bc l" style="left:68px">localhost</div>
 <div class="abs bc" style="left:139px">Database:</div>
 <div class="abs bc l" style="left:217px">opendemo49</div>
 <div class="abs bc" style="left:311px">Table:</div>
 <div class="abs bc l" style="left:366px">ic_items</div>
 <svg class="abs" style="left:127px;top:9px" width="8" height="11"><use href="#i-arr"/></svg>
 <svg class="abs" style="left:299px;top:9px" width="8" height="11"><use href="#i-arr"/></svg>
 <svg class="abs" style="left:51px;top:6px" width="16" height="17"><use href="#i-server"/></svg>
 <svg class="abs" style="left:202px;top:8px" width="14" height="14"><use href="#i-db"/></svg>
 <svg class="abs" style="left:351px;top:8px" width="13" height="12"><use href="#i-tbl13"/></svg>
 <!-- tabs -->
 <div class="abs" id="tabs">
  <div class="abs tab" style="left:0;width:6px"></div>
  <div class="abs tab" style="left:6px;width:87px"><span class="tb" style="left:30px">Structure</span><svg class="abs" style="left:10px;top:4px" width="16" height="16"><use href="#i-struct"/></svg></div>
  <div class="abs tab" style="left:171px;width:58px;border-left:1px solid #333"><span class="tb" style="left:29px">SQL</span><svg class="abs" style="left:10px;top:4px" width="16" height="16"><use href="#i-sql"/></svg></div>
  <div class="abs tab" style="left:229px;width:73px"><span class="tb" style="left:28px">Search</span><svg class="abs" style="left:9px;top:4px" width="16" height="16"><use href="#i-search"/></svg></div>
  <div class="abs tab" style="left:302px;width:68px"><span class="tb" style="left:28px">Insert</span><svg class="abs" style="left:10px;top:4px" width="16" height="16"><use href="#i-insert"/></svg></div>
  <div class="abs tab" style="left:370px;width:70px"><span class="tb" style="left:28px">Export</span><svg class="abs" style="left:10px;top:4px" width="16" height="16"><use href="#i-export"/></svg></div>
  <div class="abs tab" style="left:440px;width:96px"><span class="tb" style="left:28px">Operations</span><svg class="abs" style="left:9px;top:4px" width="16" height="16"><use href="#i-ops"/></svg></div>
  <div class="abs tab warn" style="left:536px;width:70px"><span class="tb" style="left:28px">Empty</span><svg class="abs" style="left:11px;top:4px" width="13" height="15"><use href="#i-empty"/></svg></div>
  <div class="abs tab warn" style="left:606px;width:60px"><span class="tb" style="left:28px">Drop</span><svg class="abs" style="left:9px;top:4px" width="16" height="16"><use href="#i-drop"/></svg></div>
 </div>
 <div class="abs" style="left:99px;top:32px;width:79px;height:24px;border:1px solid #777;border-bottom:none;background:linear-gradient(180deg,#a9c4e8 0,#b4ccec 40%,#fff 100%)"><span class="tb abs" style="left:29px;top:5px;font-size:10.8px;line-height:13px;color:#55558c">Browse</span><svg class="abs" style="left:10px;top:4px" width="14" height="13"><use href="#i-browse"/></svg></div>
 <!-- message box -->
 <div class="abs" style="left:7px;top:85px;width:297px;height:26px;background:linear-gradient(180deg,#f5f3f5,#e8e4e8);border-top:1px solid #ccc;border-bottom:1px solid #2a2a2a"><span class="abs" style="left:5px;top:6px;font-weight:bold;font-size:11px;line-height:13px;color:#404078;white-space:nowrap;letter-spacing:.15px">Showing rows 0 - 29 (39 total, Query took 0.0011 sec)</span></div>
 <div class="abs" style="left:7px;top:112px;width:297px;height:64px;background:#e5f1fc"></div>
 <div class="abs" style="left:7px;top:177px;width:297px;height:24px;background:#e5f1fc"></div>
 <div class="abs" style="left:12px;top:118px;font-weight:bold;font-size:11px;line-height:13px">SQL query:</div>
 <div class="abs sq" style="left:12px;top:131px"><span style="color:#c00000">SELECT</span> <span style="color:#c00000">*</span></div>
 <div class="abs sq" style="left:12px;top:144px"><span style="color:#c00000">FROM</span> <span style="color:#008000">`ic_items`</span></div>
 <div class="abs sq" style="left:12px;top:158px"><span style="color:#c00000">LIMIT</span> <span style="color:#008080">0 , 30</span></div>
 <div class="abs lk" style="left:7px;top:182px;width:297px">[<b>Edit</b>] [<b>Explain SQL</b>] [<b>Create PHP Code</b>] [<b>Refresh</b>]</div>
 <!-- nav form -->
 <div class="abs btn" style="left:67px;top:221px;width:49px;height:20px;line-height:17px">Show :</div>
 <div class="abs inp" style="left:121px;top:220px;width:45px;height:20px"><span>30</span></div>
 <div class="abs t11" style="left:169px;top:224px;letter-spacing:.12px">row(s) starting from record #</div>
 <div class="abs inp" style="left:314px;top:220px;width:59px;height:20px"><span>30</span></div>
 <div class="abs t11" style="left:20px;top:248px">in</div>
 <div class="abs sel" style="left:32px;top:244px;width:160px;height:19px"><span class="abs v" style="color:#3c3c7c">horizontal</span><div class="abs sbtn dd"><svg width="16" height="16"><use href="#a-dn"/></svg></div></div>
 <div class="abs t11" style="left:195px;top:248px">mode and repeat headers after</div>
 <div class="abs inp" style="left:349px;top:244px;width:44px;height:19px"><span>100</span></div>
 <div class="abs t11" style="left:397px;top:248px">cells</div>
 <div class="abs btn" style="left:436px;top:233px;width:20px;height:20px;line-height:16px;font-size:9px">&gt;</div>
 <div class="abs btn" style="left:460px;top:233px;width:20px;height:20px;line-height:16px;font-size:9px">&gt;&gt;</div>
 <div class="abs t11" style="left:496px;top:243px;letter-spacing:-.25px">Page number:</div>
 <div class="abs sel" style="left:563px;top:239px;width:31px;height:19px"><span class="abs v" style="color:#3c3c7c;left:3px">1</span><div class="abs sbtn dd"><svg width="16" height="16"><use href="#a-dn"/></svg></div></div>
 <div class="abs t11" style="left:5px;top:274px">Sort by key:</div>
 <div class="abs sel" style="left:67px;top:270px;width:140px;height:20px"><span class="abs v" style="color:#3c3c7c;top:3px">None</span><div class="abs sbtn dd"><svg width="16" height="16"><use href="#a-dn"/></svg></div></div>
 <div class="abs btn" style="left:213px;top:270px;width:23px;height:21px;line-height:18px">Go</div>
 <svg class="abs" style="left:20px;top:296px" width="48" height="14"><use href="#i-ft"/></svg>
<div class="abs" style="left:7px;top:316px;width:74px;height:1px;background:#2a2a2a"></div>
<div class="abs th" style="left:82px;width:64px"><span class="tb">companyid</span></div>
<div class="abs th" style="left:147px;width:28px"><span class="tb">id</span></div>
<div class="abs th" style="left:176px;width:70px"><span class="tb">partnum</span></div>
<div class="abs th" style="left:247px;width:42px"><span class="tb">rev_no</span></div>
<div class="abs th" style="left:290px;width:65px"><span class="tb">status_flag</span></div>
<div class="abs th" style="left:356px;width:70px"><span class="tb">vnum</span></div>
<div class="abs th" style="left:427px;width:72px"><span class="tb">apvendor_id</span></div>
<div class="abs th" style="left:500px;width:70px"><span class="tb">man</span></div>
<div class="abs th" style="left:571px;width:67px"><span class="tb">description</span></div>
<div class="abs th" style="left:639px;width:51px"><span class="tb">inv_uom</span></div>
<div class="abs th" style="left:691px;width:55px"><span class="tb">sell_uom</span></div>
<div class="abs th" style="left:747px;width:76px"><span class="tb">inv_to_sell_ratio</span></div>
<div class="abs c r1" style="left:7px;top:318px;width:24px;height:88px;"><div class="abs cb" style="left:6px;top:7px"></div></div>
<div class="abs c r1" style="left:32px;top:318px;width:24px;height:88px;"><svg class="abs" style="left:4px;top:2px" width="16" height="16"><use href="#i-edit"/></svg></div>
<div class="abs c r1" style="left:57px;top:318px;width:24px;height:88px;"><svg class="abs" style="left:4px;top:2px" width="16" height="16"><use href="#i-drop"/></svg></div>
<div class="abs c r1" style="left:82px;top:318px;width:64px;height:88px;letter-spacing:-1px;">DEMO</div>
<div class="abs c r1" style="left:147px;top:318px;width:28px;height:88px;text-align:right;padding-right:3px;">1</div>
<div class="abs c r1" style="left:176px;top:318px;width:70px;height:88px;">FG100</div>
<div class="abs c r1" style="left:247px;top:318px;width:42px;height:88px;">1a</div>
<div class="abs c r1" style="left:290px;top:318px;width:65px;height:88px;">Active</div>
<div class="abs c r1" style="left:356px;top:318px;width:70px;height:88px;">V101</div>
<div class="abs c r1" style="left:427px;top:318px;width:72px;height:88px;text-align:right;padding-right:3px;">0</div>
<div class="abs c r1" style="left:500px;top:318px;width:70px;height:88px;white-space:nowrap;letter-spacing:-.3px;">OpenPro Toy<br>Company 1</div>
<div class="abs c r1" style="left:571px;top:318px;width:67px;height:88px;white-space:nowrap;letter-spacing:-.15px;">FG100<br>OpenPro<br>standard<br>model</div>
<div class="abs c r1" style="left:639px;top:318px;width:51px;height:88px;">Each</div>
<div class="abs c r1" style="left:691px;top:318px;width:55px;height:88px;">Each</div>
<div class="abs c r1" style="left:747px;top:318px;width:76px;height:88px;"></div>
<div class="abs c r2" style="left:7px;top:407px;width:24px;height:74px;"><div class="abs cb" style="left:6px;top:7px"></div></div>
<div class="abs c r2" style="left:32px;top:407px;width:24px;height:74px;"><svg class="abs" style="left:4px;top:2px" width="16" height="16"><use href="#i-edit"/></svg></div>
<div class="abs c r2" style="left:57px;top:407px;width:24px;height:74px;"><svg class="abs" style="left:4px;top:2px" width="16" height="16"><use href="#i-drop"/></svg></div>
<div class="abs c r2" style="left:82px;top:407px;width:64px;height:74px;letter-spacing:-1px;">DEMO</div>
<div class="abs c r2" style="left:147px;top:407px;width:28px;height:74px;text-align:right;padding-right:3px;">2</div>
<div class="abs c r2" style="left:176px;top:407px;width:70px;height:74px;">FG300</div>
<div class="abs c r2" style="left:247px;top:407px;width:42px;height:74px;">1</div>
<div class="abs c r2" style="left:290px;top:407px;width:65px;height:74px;">Active</div>
<div class="abs c r2" style="left:356px;top:407px;width:70px;height:74px;">OP</div>
<div class="abs c r2" style="left:427px;top:407px;width:72px;height:74px;text-align:right;padding-right:3px;">0</div>
<div class="abs c r2" style="left:500px;top:407px;width:70px;height:74px;white-space:nowrap;letter-spacing:-.3px;">OpenPro<br>Demo</div>
<div class="abs c r2" style="left:571px;top:407px;width:67px;height:74px;white-space:nowrap;letter-spacing:-.15px;">Custom<br>Colors<br>Custom side<br>rails Custom<br>Pin Stripes</div>
<div class="abs c r2" style="left:639px;top:407px;width:51px;height:74px;">Each</div>
<div class="abs c r2" style="left:691px;top:407px;width:55px;height:74px;">Each</div>
<div class="abs c r2" style="left:747px;top:407px;width:76px;height:74px;"></div>
<div class="abs c r3" style="left:7px;top:482px;width:24px;height:74px;"><div class="abs cb" style="left:6px;top:7px"></div></div>
<div class="abs c r3" style="left:32px;top:482px;width:24px;height:74px;"><svg class="abs" style="left:4px;top:2px" width="16" height="16"><use href="#i-edit"/></svg></div>
<div class="abs c r3" style="left:57px;top:482px;width:24px;height:74px;"><svg class="abs" style="left:4px;top:2px" width="16" height="16"><use href="#i-drop"/></svg></div>
<div class="abs c r3" style="left:82px;top:482px;width:64px;height:74px;letter-spacing:-1px;">DEMO</div>
<div class="abs c r3" style="left:147px;top:482px;width:28px;height:74px;text-align:right;padding-right:3px;">3</div>
<div class="abs c r3" style="left:176px;top:482px;width:70px;height:74px;">FG200</div>
<div class="abs c r3" style="left:247px;top:482px;width:42px;height:74px;">1</div>
<div class="abs c r3" style="left:290px;top:482px;width:65px;height:74px;">Active</div>
<div class="abs c r3" style="left:356px;top:482px;width:70px;height:74px;">OP</div>
<div class="abs c r3" style="left:427px;top:482px;width:72px;height:74px;text-align:right;padding-right:3px;">0</div>
<div class="abs c r3" style="left:500px;top:482px;width:70px;height:74px;white-space:nowrap;letter-spacing:-.3px;">Open Pro<br>Demo<br>company</div>
<div class="abs c r3" style="left:571px;top:482px;width:67px;height:74px;white-space:nowrap;letter-spacing:-.15px;">Deluxe<br>Mountain<br>Bike with<br>wood side<br>rails</div>
<div class="abs c r3" style="left:639px;top:482px;width:51px;height:74px;">Feet</div>
<div class="abs c r3" style="left:691px;top:482px;width:55px;height:74px;">Pound</div>
<div class="abs c r3" style="left:747px;top:482px;width:76px;height:74px;"></div>
<div class="abs c r2" style="left:7px;top:557px;width:24px;height:89px;"><div class="abs cb" style="left:6px;top:7px"></div></div>
<div class="abs c r2" style="left:32px;top:557px;width:24px;height:89px;"><svg class="abs" style="left:4px;top:2px" width="16" height="16"><use href="#i-edit"/></svg></div>
<div class="abs c r2" style="left:57px;top:557px;width:24px;height:89px;"><svg class="abs" style="left:4px;top:2px" width="16" height="16"><use href="#i-drop"/></svg></div>
<div class="abs c r2" style="left:82px;top:557px;width:64px;height:89px;letter-spacing:-1px;">DEMO</div>
<div class="abs c r2" style="left:147px;top:557px;width:28px;height:89px;text-align:right;padding-right:3px;">4</div>
<div class="abs c r2" style="left:176px;top:557px;width:70px;height:89px;">FG400</div>
<div class="abs c r2" style="left:247px;top:557px;width:42px;height:89px;">1</div>
<div class="abs c r2" style="left:290px;top:557px;width:65px;height:89px;">Active</div>
<div class="abs c r2" style="left:356px;top:557px;width:70px;height:89px;">OP</div>
<div class="abs c r2" style="left:427px;top:557px;width:72px;height:89px;text-align:right;padding-right:3px;">0</div>
<div class="abs c r2" style="left:500px;top:557px;width:70px;height:89px;white-space:nowrap;letter-spacing:-.3px;">OpenPro<br>Custom<br>Mountain Bike</div>
<div class="abs c r2" style="left:571px;top:557px;width:67px;height:89px;white-space:nowrap;letter-spacing:-.15px;">FG400<br>&nbsp;Custom<br>electric<br>Mountain<br>Bike street<br>legal</div>
<div class="abs c r2" style="left:639px;top:557px;width:51px;height:89px;">Each</div>
<div class="abs c r2" style="left:691px;top:557px;width:55px;height:89px;">Each</div>
<div class="abs c r2" style="left:747px;top:557px;width:76px;height:89px;"></div>
 <!-- scrollbars -->
 <div class="abs track" style="left:812px;top:0;width:16px;height:647px"></div>
 <div class="abs sbtn" style="left:812px;top:0"><svg width="16" height="16"><use href="#a-up"/></svg></div>
 <div class="abs sbtn" style="left:812px;top:16px;height:198px"></div>
 <div class="abs sbtn" style="left:812px;top:631px"><svg width="16" height="16"><use href="#a-dn"/></svg></div>
 <div class="abs track" style="left:0;top:647px;width:812px;height:16px"></div>
 <div class="abs sbtn" style="left:-1px;top:647px"><svg width="16" height="16"><use href="#a-lt"/></svg></div>
 <div class="abs sbtn" style="left:796px;top:647px"><svg width="16" height="16"><use href="#a-rt"/></svg></div>
 <div class="abs sbtn" style="left:15px;top:647px;width:168px"></div>
 <div class="abs" style="left:812px;top:647px;width:16px;height:16px;background:#d4d0c8"></div>
</div>

</body></html>
